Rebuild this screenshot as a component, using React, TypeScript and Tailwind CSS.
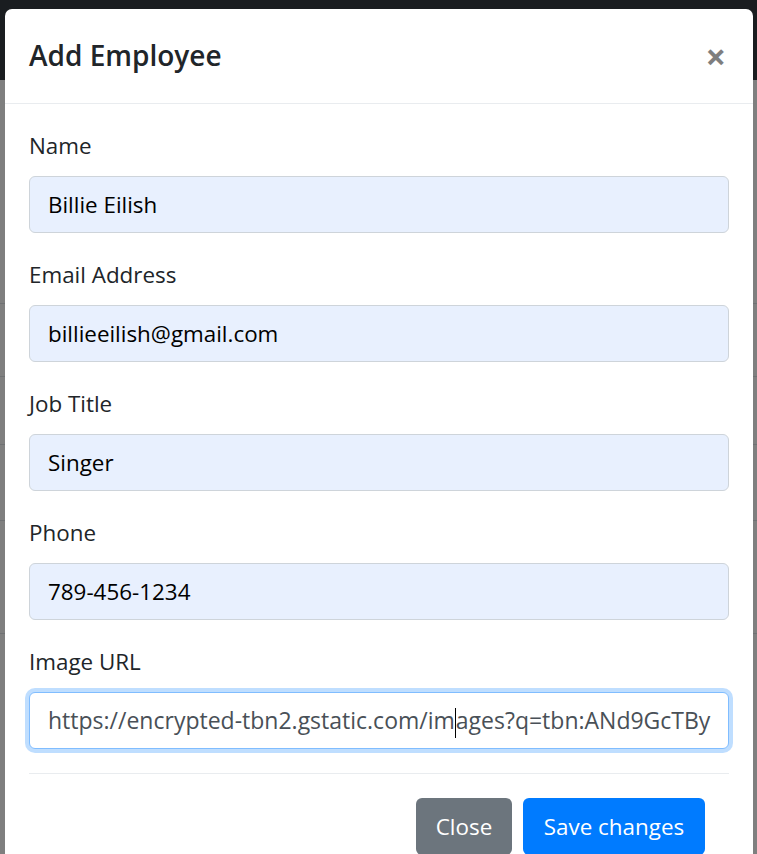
import React from "react";

const FIELDS = [
  { label: "Name", value: "Billie Eilish" },
  { label: "Email Address", value: "billieeilish@gmail.com" },
  { label: "Job Title", value: "Singer" },
  { label: "Phone", value: "789-456-1234" },
];

const font = { fontFamily: '"Open Sans", "Noto Sans", sans-serif' };

export default function App() {
  return (
    <div className="relative h-[854px] w-[757px] overflow-hidden bg-white" style={font}>
      {/* page behind the modal */}
      <div className="h-[80px] bg-[#343a40]" />
      <div className="flex flex-col">
        <div className="h-[223px]" />
        <div className="h-[73px] border-t border-[#dee2e6]" />
        <div className="h-[68px] border-t border-[#dee2e6]" />
        <div className="h-[76px] border-t border-[#dee2e6]" />
        <div className="h-[113px] border-t border-[#dee2e6]" />
        <div className="h-[120px] border-t border-[#dee2e6]" />
      </div>

      {/* backdrop */}
      <div className="absolute inset-0 bg-black/50" />

      {/* modal */}
      <div className="absolute left-[5px] top-[9px] w-[748px] rounded-[7px] bg-white text-[#212529]">
        <div className="flex items-start justify-between border-b border-[#e9ecef] p-[24px]">
          <h5 className="text-[28px] font-semibold leading-[45px]">Add Employee</h5>
          <button className="mt-[1px] mr-[3px] text-[36px] font-bold leading-[45px] text-black opacity-50">
            ×
          </button>
        </div>

        <div className="p-[24px]">
          {FIELDS.map((f) => (
            <div key={f.label} className="mb-[24px]">
              <label className="mb-[12px] block text-[22.4px] leading-[36px]">{f.label}</label>
              <div className="h-[57px] rounded-[6px] border border-[#ced4da] bg-[#e8f0fe] px-[18px] text-[22.4px] leading-[55px] text-black">
                {f.value}
              </div>
            </div>
          ))}

          <div className="mb-[24px]">
            <label className="mb-[12px] block text-[22.4px] leading-[36px]">Image URL</label>
            <div className="h-[57px] overflow-hidden whitespace-nowrap rounded-[6px] border border-[#80bdff] bg-white px-[18px] text-[23px] leading-[55px] text-[#495057] shadow-[0_0_0_4px_rgba(0,123,255,0.25)]">
              https://encrypted-tbn2.gstatic.com/im
              <span className="inline-block h-[30px] w-px align-middle bg-black" />
              ages?q=tbn:ANd9GcTBy
            </div>
          </div>

          <div className="flex justify-end gap-[11px] border-t border-[#e9ecef] pt-[24px] pr-[24px]">
            <button className="h-[57px] w-[96px] rounded-[6px] bg-[#6c757d] text-[22.4px] text-white">
              Close
            </button>
            <button className="h-[57px] w-[182px] rounded-[6px] bg-[#007bff] text-[22.4px] text-white">
              Save changes
            </button>
          </div>
        </div>
      </div>
    </div>
  );
}
